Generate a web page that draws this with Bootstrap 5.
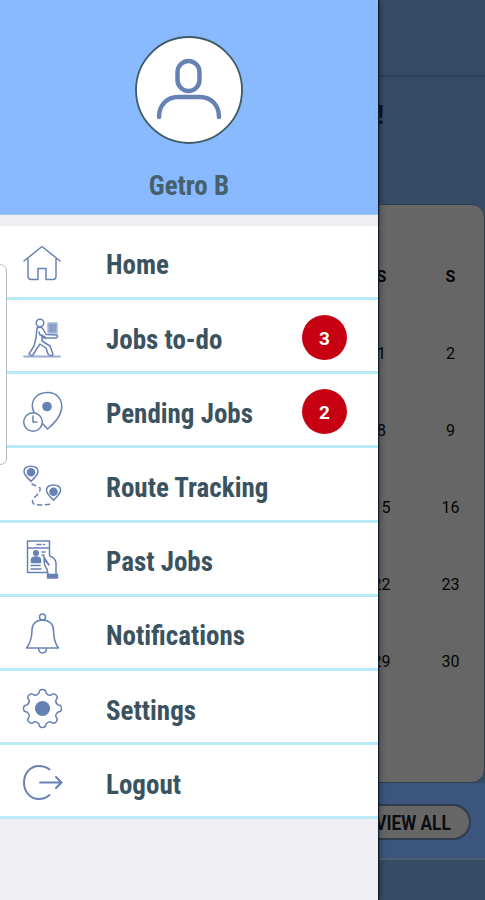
<!DOCTYPE html>
<html lang="en">
<head>
<meta charset="utf-8">
<meta name="viewport" content="width=device-width, initial-scale=1">
<title>Jobs menu</title>
<link href="https://cdn.jsdelivr.net/npm/bootstrap@5.3.0/dist/css/bootstrap.min.css" rel="stylesheet">
<style>
body{font-family:"Roboto Condensed",Roboto,sans-serif;background:#364b65}
.stage{height:900px}
.under{height:900px;color:#050505;font-family:Roboto,sans-serif}
.topbar{height:77px;border-bottom:2px solid #2d405a}
.greet{height:127px;padding:19px 101px 0 0;font-size:26px;color:#10151c}
.calendar{height:579px;width:200px;background:#666;border:1px solid #303f4d;border-radius:0 13px 13px 0;padding-top:33px}
.week{height:77px;font-size:16px;line-height:77px}
.week .day{width:69px}
.week .day:last-child{margin-right:-1px}
.lower{height:77px;background:#3b557c;border-bottom:2px solid #49606f;padding:21px 14px 0 0}
.viewall{width:120px;height:36px;border:2px solid #303b4d;background:#666;border-radius:19px;font-size:20px;padding-right:18px;line-height:34px;color:#0a0d11}
.viewall span{display:inline-block;white-space:nowrap;transform:scaleX(.86);transform-origin:right}
.drawer{width:378px;height:900px;background:#efeef3;box-shadow:1px 0 1px #111a28,2px 0 6px rgba(0,0,0,.35)}
.profile{height:215px;background:#89b9ff;padding-top:36px;border-bottom:1px solid #a4c6f7}
.avatar{width:108px;height:108px}
.user{font-size:27px;line-height:30px;color:#46606c;margin-top:27px}
.menu{margin-top:10.9px}
.entry{height:74.2px;border-bottom:3px solid #b8ebf7;background:#fff}
.entry svg{width:80px;height:72px;flex:none}
.text{font-size:27px;line-height:30px;color:#3b5360;margin-left:26px;padding-top:8px;white-space:nowrap}
.count{width:45px;height:45px;background:#c60212;font:bold 19px/1 Roboto,sans-serif;margin:3px 31px 0 auto;padding-top:2px}
.ico{fill:none;stroke:#6682b5;stroke-width:1.5;stroke-linecap:round;stroke-linejoin:round}
.edge{left:-4px;top:264px;width:11px;height:201px;background:#fff;border:1px solid #bbb;border-radius:0 7px 7px 0}
</style>
<script src="https://cdn.jsdelivr.net/npm/bootstrap@5.3.0/dist/js/bootstrap.bundle.min.js"></script>
</head>
<body>
<div class="stage position-relative overflow-hidden">
  <main class="under">
    <div class="topbar"></div>
    <div class="greet text-end fw-bold">!</div>
    <section class="calendar ms-auto">
      <div class="week d-flex justify-content-end text-center fw-bold"><span class="day">S</span><span class="day">S</span></div>
      <div class="week d-flex justify-content-end text-center"><span class="day">1</span><span class="day">2</span></div>
      <div class="week d-flex justify-content-end text-center"><span class="day">8</span><span class="day">9</span></div>
      <div class="week d-flex justify-content-end text-center"><span class="day">15</span><span class="day">16</span></div>
      <div class="week d-flex justify-content-end text-center"><span class="day">22</span><span class="day">23</span></div>
      <div class="week d-flex justify-content-end text-center"><span class="day">29</span><span class="day">30</span></div>
    </section>
    <div class="lower"><div class="viewall ms-auto text-end fw-bold"><span>VIEW ALL</span></div></div>
  </main>

  <nav class="drawer position-absolute top-0 start-0">
    <header class="profile text-center">
      <svg class="avatar d-block mx-auto" viewBox="0 0 108 108"><circle cx="54" cy="54" r="53" fill="#fff" stroke="#3d5c64" stroke-width="1.8"/><g fill="none" stroke="#6682b5" stroke-width="4.5" stroke-linecap="round"><rect x="42.500" y="25" width="22" height="30" rx="11"/><path d="M24 81C24 69 32 61 43 61H65C76 61 84 69 84 81"/></g></svg>
      <div class="user fw-bold">Getro B</div>
    </header>
    <div class="menu">
      <div class="entry d-flex align-items-center">
        <svg class="ico" viewBox="0 225 80 72"><path d="M24 261L42 246.500L60 261M28 259V276Q28 279.500 31.500 279.500H38V268.500H46V279.500H53Q56 279.500 56 276V259"/></svg>
        <span class="text fw-bold">Home</span>
      </div>
      <div class="entry d-flex align-items-center">
        <svg class="ico" viewBox="0 299 80 72"><path d="M24 355.500H60" stroke-width="1.800" stroke="#98acd0"/><circle cx="40" cy="322" r="3.800"/><path d="M37 327Q41 325 43 328L46 333.500L57 334Q59 336 55 337L44 337L42 334V340L50 345L53 353.500Q51 356 48 353L46 347L40 343L36 349L33 354Q30 355 29 353L34 345L36 337Z"/><path d="M39 331L40 334L45 336"/><rect x="48" y="322" width="9" height="10" fill="#8a9fc9" stroke="#a9b9da"/></svg>
        <span class="text fw-bold">Jobs to-do</span><span class="count rounded-circle text-white d-flex align-items-center justify-content-center">3</span>
      </div>
      <div class="entry d-flex align-items-center">
        <svg class="ico" viewBox="0 373.500 80 72"><path d="M34 412C29 401 36 392 47.500 392C57 392 63 399 61.500 409C60 417 53 424 47.500 428.500L42.500 423"/><circle cx="47" cy="406" r="4.800" fill="#6682b5" stroke="none"/><circle cx="33" cy="421.500" r="9.300" fill="#fff"/><path d="M33 415.500V421.500H37"/></svg>
        <span class="text fw-bold">Pending Jobs</span><span class="count rounded-circle text-white d-flex align-items-center justify-content-center">2</span>
      </div>
      <div class="entry d-flex align-items-center">
        <svg class="ico" viewBox="0 448 80 72"><path id="pin" d="M31 481.500C27 477 24 475 24 471.500C24 468 27 466.200 31 466.200S38 468 38 471.500C38 475 35 477 31 481.500Z"/><circle cx="31" cy="472.300" r="3.500" fill="#6682b5"/><use href="#pin" x="22.500" y="18.800"/><circle cx="53.500" cy="491.800" r="3.500" fill="#6682b5"/><path d="M32 484L40 488Q41 491 36 496Q30 501 34 504Q39 506 52 504" stroke-dasharray="4 4"/></svg>
        <span class="text fw-bold">Route Tracking</span>
      </div>
      <div class="entry d-flex align-items-center">
        <svg class="ico" viewBox="0 522 80 72"><path d="M49.500 555V541H27.500V572.500H47M27.500 548H49.500M37 544.500H41M43.500 544.500H44.500M42 552H45M42 555H44M31 565.500H40M31 569H41M49.500 556Q55 557 56 563V574M48 574L47 569Q44 566 44 559L49 565L43.500 556.500"/><circle cx="36" cy="553" r="2.300" fill="#6682b5"/><path d="M31.500 562.500V560Q31.500 557 36 557T40.500 560V562.500Z" fill="#6682b5"/><rect x="47.500" y="574.500" width="10" height="3.500" fill="#6682b5"/></svg>
        <span class="text fw-bold">Past Jobs</span>
      </div>
      <div class="entry d-flex align-items-center">
        <svg class="ico" viewBox="0 596.500 80 72"><circle cx="42.500" cy="617.500" r="3"/><path d="M26.500 648.500C30 644 32 639 32 630.500C32 624.500 36 620.500 42.500 620.500S53.500 624.500 53.500 630.500C53.500 639 55 644 58.500 648.500ZM38.500 649Q39 653.500 42.500 653.500T46.500 649"/></svg>
        <span class="text fw-bold">Notifications</span>
      </div>
      <div class="entry d-flex align-items-center">
        <svg class="ico" viewBox="0 671 80 72"><g transform="translate(42.500 708.500)"><path d="M-3.500-15.500Q-3.500-19 0-19T3.500-15.500Q6-12.500 8.500-13.500Q11-16 13.500-13.500T13.500-8.500Q12.500-6 15.500-3.500Q19-3.500 19 0T15.500 3.500Q12.500 6 13.500 8.500Q16 11 13.500 13.500T8.500 13.500Q6 12.500 3.500 15.500Q3.500 19 0 19T-3.500 15.500Q-6 12.500-8.500 13.500Q-11 16-13.500 13.500T-13.500 8.500Q-12.500 6-15.500 3.500Q-19 3.500-19 0T-15.500-3.500Q-12.500-6-13.500-8.500Q-16-11-13.500-13.500T-8.500-13.500Q-6-12.500-3.500-15.500Z"/><circle r="7.600" fill="#6682b5" stroke="none"/></g></svg>
        <span class="text fw-bold">Settings</span>
      </div>
      <div class="entry d-flex align-items-center">
        <svg class="ico" viewBox="0 745 80 72"><path d="M49.500 769.500Q45 766 39 766C30 766 24 773.500 24 782.500S30 799 39 799Q45 799 49.500 795M40 782.500H61M56 777L61.500 782.500L56 788" stroke-width="2"/></svg>
        <span class="text fw-bold">Logout</span>
      </div>
    </div>
  </nav>
  <div class="edge position-absolute"></div>
</div>
</body>
</html>
